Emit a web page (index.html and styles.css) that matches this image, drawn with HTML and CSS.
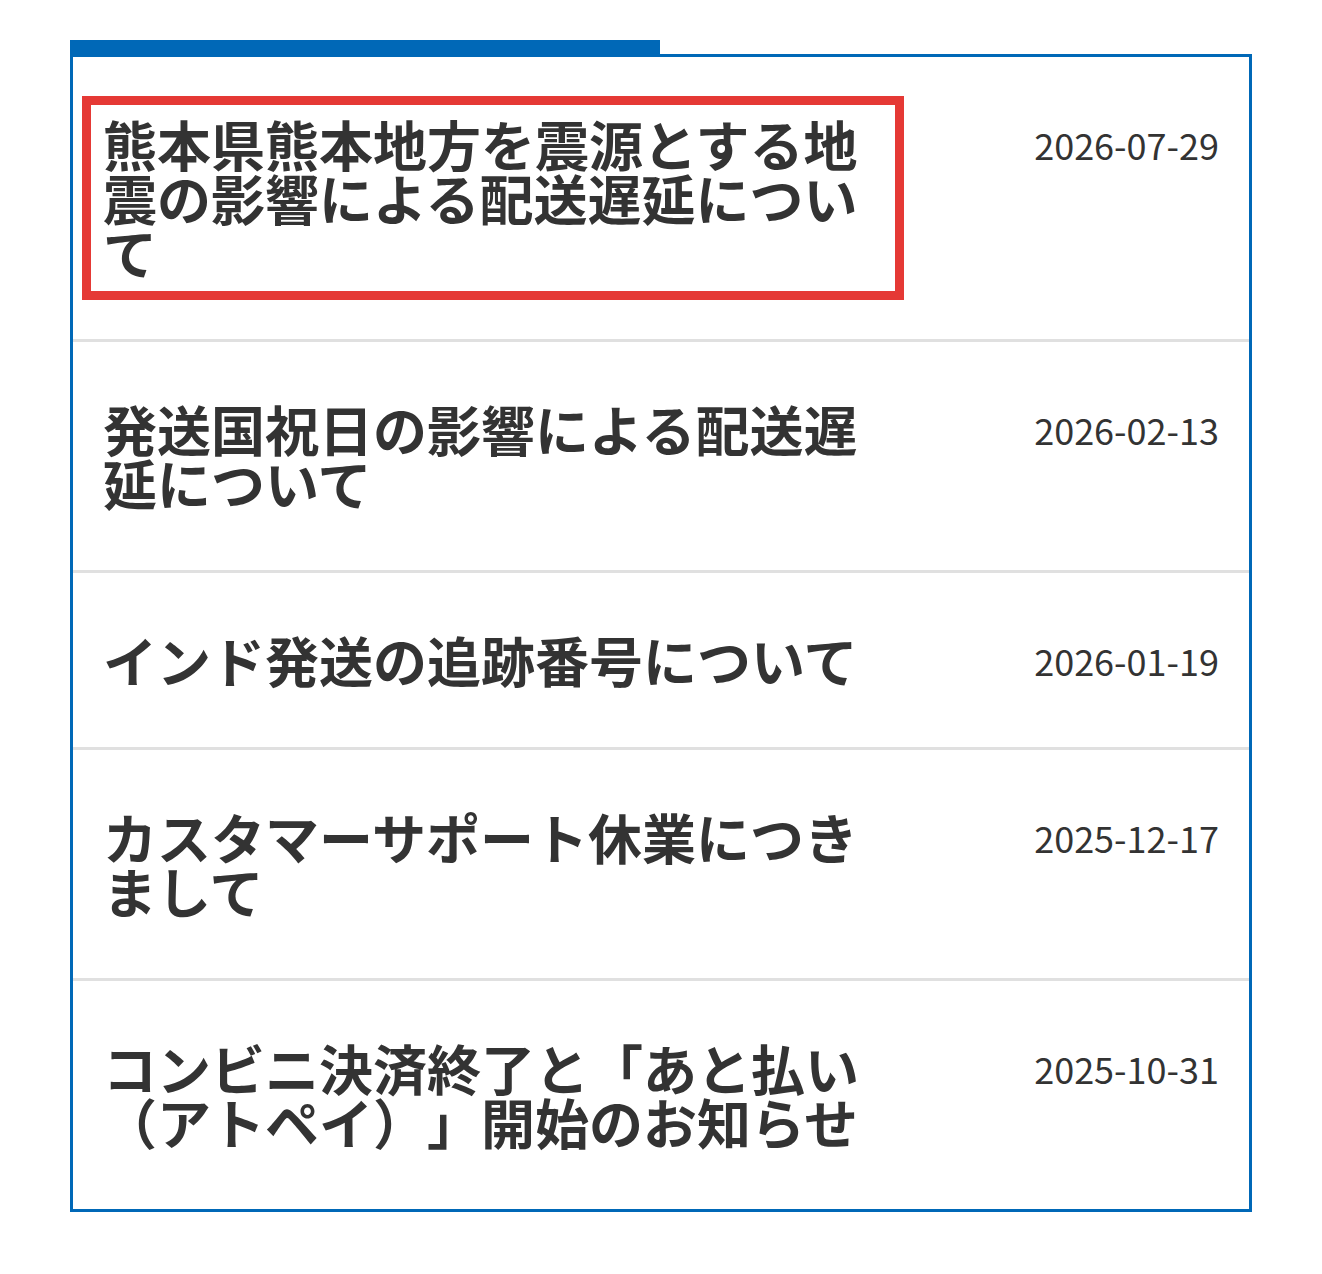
FILE: index.html
```html
<!DOCTYPE html>
<html lang="ja">
<head>
<meta charset="utf-8">
<title>お知らせ</title>
<link rel="stylesheet" href="styles.css">
</head>
<body>
<div class="page">
  <div class="tab"></div>
  <ul class="news">
    <li class="row">
      <span class="title highlight">熊本県熊本地方を震源とする地震の影響による配送遅延について</span>
      <span class="date">2026-07-29</span>
    </li>
    <li class="row">
      <span class="title">発送国祝日の影響による配送遅延について</span>
      <span class="date">2026-02-13</span>
    </li>
    <li class="row">
      <span class="title">インド発送の追跡番号について</span>
      <span class="date">2026-01-19</span>
    </li>
    <li class="row">
      <span class="title">カスタマーサポート休業につきまして</span>
      <span class="date">2025-12-17</span>
    </li>
    <li class="row">
      <span class="title">コンビニ決済終了と「あと払い（アトペイ）」開始のお知らせ</span>
      <span class="date">2025-10-31</span>
    </li>
  </ul>
</div>
</body>
</html>
```

FILE: styles.css
```css
html, body {
  margin: 0;
  padding: 0;
  background: #ffffff;
}

body {
  font-family: "Noto Sans CJK JP", "Noto Sans", sans-serif;
  color: #333333;
}

.page {
  padding: 40px 0 0 70px;
  width: 1182px;
}

.tab {
  width: 590px;
  height: 14px;
  background: #0068b7;
}

.news {
  list-style: none;
  margin: 0;
  padding: 0;
  border: 3px solid #0068b7;
}

.row {
  display: flex;
  justify-content: space-between;
  align-items: flex-start;
  padding: 60px 30px 60px 30px;
}

.row + .row {
  border-top: 3px solid #e0e0e0;
}

.title {
  display: block;
  width: 780px;
  font-size: 54px;
  line-height: 54px;
  font-weight: 700;
  text-spacing-trim: space-all;
}

.highlight {
  outline: 9px solid #e53935;
  outline-offset: 12px;
}

.date {
  display: block;
  font-size: 36px;
  line-height: 54px;
  font-weight: 400;
  text-align: right;
  white-space: nowrap;
}
```
